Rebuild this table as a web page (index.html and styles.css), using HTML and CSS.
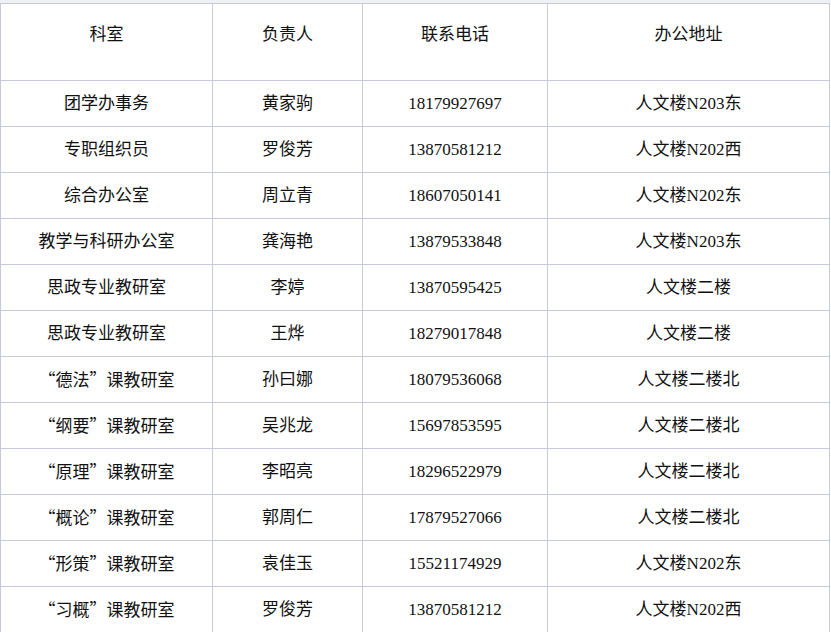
FILE: index.html
```html
<!DOCTYPE html>
<html lang="zh-CN">
<head>
<meta charset="utf-8">
<title>科室联系方式</title>
<link rel="stylesheet" href="styles.css">
</head>
<body>
<div class="top-strip"></div>
<table class="contacts">
  <colgroup>
    <col class="c1"><col class="c2"><col class="c3"><col class="c4">
  </colgroup>
  <thead>
    <tr><th>科室</th><th>负责人</th><th>联系电话</th><th>办公地址</th></tr>
  </thead>
  <tbody>
    <tr><td>团学办事务</td><td>黄家驹</td><td>18179927697</td><td>人文楼N203东</td></tr>
    <tr><td>专职组织员</td><td>罗俊芳</td><td>13870581212</td><td>人文楼N202西</td></tr>
    <tr><td>综合办公室</td><td>周立青</td><td>18607050141</td><td>人文楼N202东</td></tr>
    <tr><td>教学与科研办公室</td><td>龚海艳</td><td>13879533848</td><td>人文楼N203东</td></tr>
    <tr><td>思政专业教研室</td><td>李婷</td><td>13870595425</td><td>人文楼二楼</td></tr>
    <tr><td>思政专业教研室</td><td>王烨</td><td>18279017848</td><td>人文楼二楼</td></tr>
    <tr><td><span class="q">“</span>德法<span class="q">”</span>课教研室</td><td>孙曰娜</td><td>18079536068</td><td>人文楼二楼北</td></tr>
    <tr><td><span class="q">“</span>纲要<span class="q">”</span>课教研室</td><td>吴兆龙</td><td>15697853595</td><td>人文楼二楼北</td></tr>
    <tr><td><span class="q">“</span>原理<span class="q">”</span>课教研室</td><td>李昭亮</td><td>18296522979</td><td>人文楼二楼北</td></tr>
    <tr><td><span class="q">“</span>概论<span class="q">”</span>课教研室</td><td>郭周仁</td><td>17879527066</td><td>人文楼二楼北</td></tr>
    <tr><td><span class="q">“</span>形策<span class="q">”</span>课教研室</td><td>袁佳玉</td><td>15521174929</td><td>人文楼N202东</td></tr>
    <tr><td><span class="q">“</span>习概<span class="q">”</span>课教研室</td><td>罗俊芳</td><td>13870581212</td><td>人文楼N202西</td></tr>
  </tbody>
</table>
</body>
</html>
```

FILE: styles.css
```css
html, body {
  margin: 0;
  padding: 0;
  background: #ffffff;
}
body {
  font-family: "Liberation Serif", "Noto Sans CJK SC", serif;
  font-size: 17px;
  color: #111111;
  overflow: hidden;
}
.top-strip {
  height: 3px;
  background: #eef0f4;
}
.contacts {
  border-collapse: collapse;
  table-layout: fixed;
  width: 829px;
}
.c1 { width: 212px; }
.c2 { width: 150px; }
.c3 { width: 185px; }
.c4 { width: 282px; }
.contacts th,
.contacts td {
  border: 1px solid #c6cadc;
  text-align: center;
  padding: 0;
  line-height: 20px;
  font-weight: 400;
}
.contacts th {
  height: 77px;
  vertical-align: top;
  padding-top: 21px;
  box-sizing: border-box;
}
.contacts td {
  height: 45px;
  vertical-align: middle;
}
.q {
  display: inline-block;
  width: 1em;
  font-family: "Noto Sans CJK SC", sans-serif;
}
.q:first-child {
  text-align: right;
}
.q:nth-child(2) {
  text-align: left;
}
```
